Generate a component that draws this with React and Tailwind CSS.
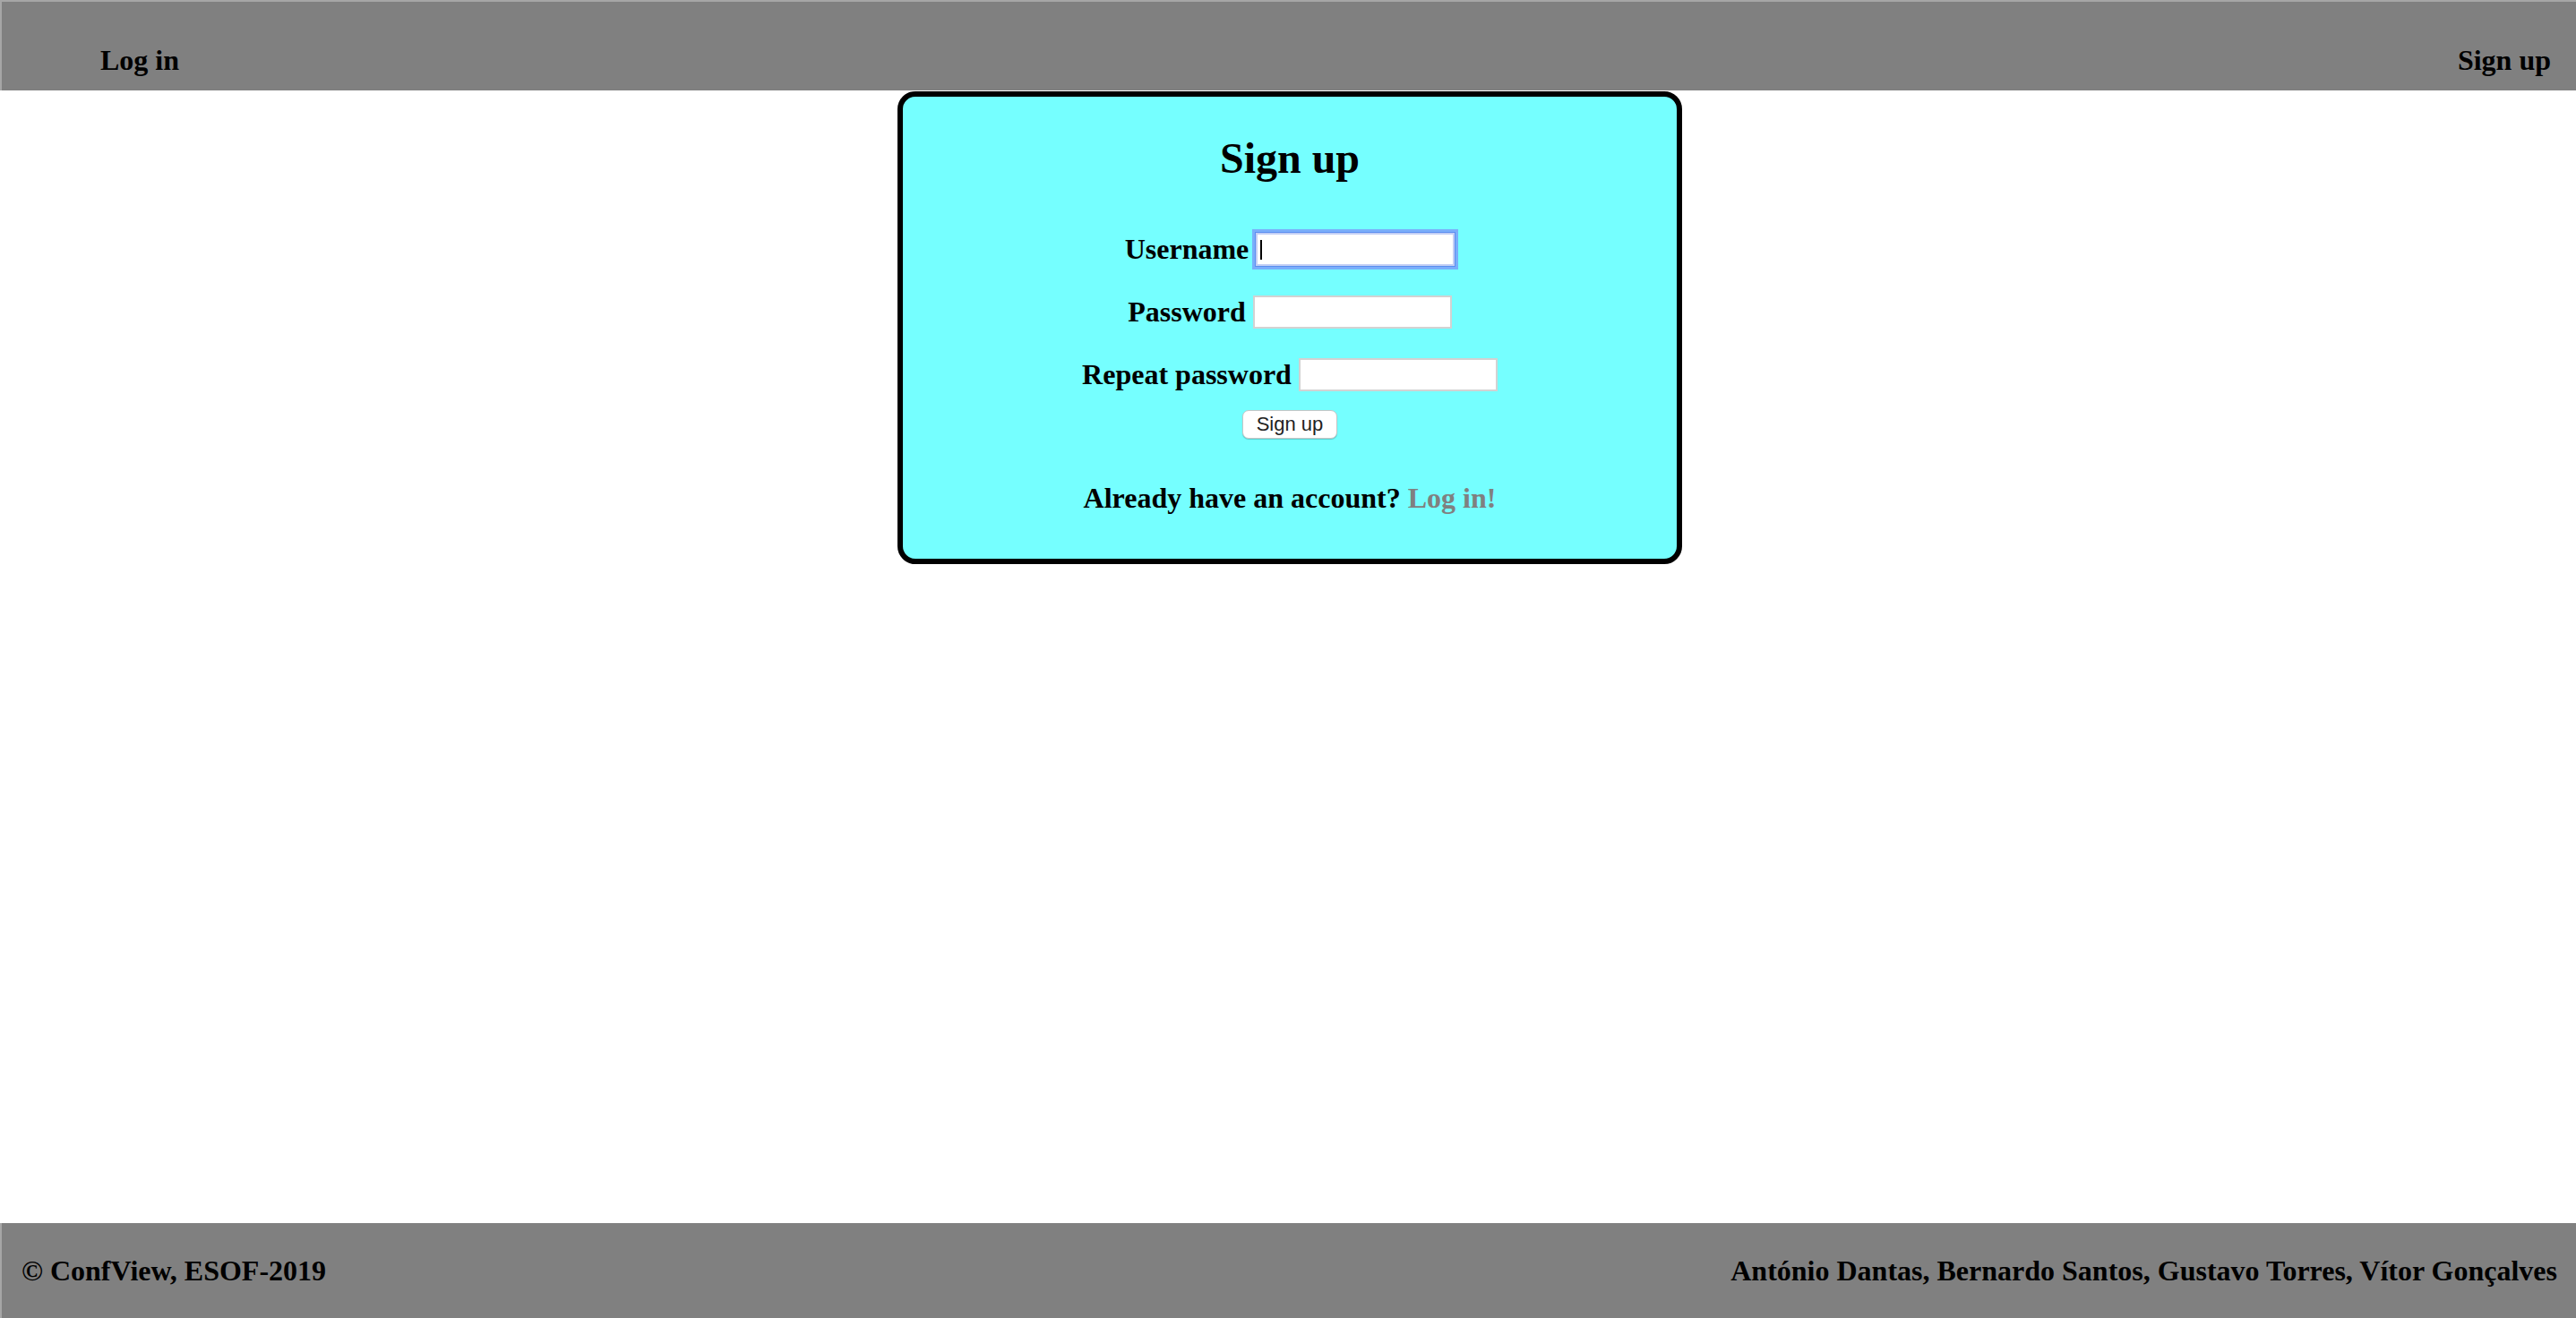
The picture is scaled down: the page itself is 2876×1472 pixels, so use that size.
import React from 'react';

const serif = { fontFamily: '"Liberation Serif", "Times New Roman", serif' };

const Field = ({ label, focused }) => (
    <div className="flex items-center justify-center gap-2 h-[37px]">
        <label className="text-[32px] font-bold leading-[37px] text-black">{label}</label>
        <div className="relative">
            <input
                type={label === 'Username' ? 'text' : 'password'}
                className={
                    focused
                        ? 'w-[222px] h-[37px] bg-white border-2 border-[#c3cff5] outline-none shadow-[0_0_0_1px_#5b8ef0,0_0_0_4px_#7aaefa]'
                        : 'w-[222px] h-[37px] bg-white border-2 border-[#d2d2d2] outline-none'
                }
            />
            {focused && <span className="absolute left-[5px] top-[8px] w-[2px] h-[22px] bg-black"></span>}
        </div>
    </div>
);

export default function App() {
    return (
        <div className="min-h-screen flex flex-col bg-white" style={serif}>

            {/* HEADER */}
            <header className="h-[101px] bg-[#808080] border-t-2 border-l-2 border-[#a6a6a6] flex justify-between pt-[47px] pl-[110px] pr-[28px]">
                <a className="text-[32px] font-bold leading-[37px] text-black">Log in</a>
                <a className="text-[32px] font-bold leading-[37px] text-black">Sign up</a>
            </header>

            {/* MAIN */}
            <main className="flex-1 flex justify-center">
                <div className="mt-px ml-1 w-[876px] h-[528px] bg-[#75ffff] border-[6px] border-black rounded-[20px] flex flex-col items-center pt-[41px]">
                    <h2 className="text-[48px] font-bold leading-[55px] text-black">Sign up</h2>

                    <div className="mt-[56px] flex flex-col gap-[33px]">
                        <Field label="Username" focused />
                        <Field label="Password" />
                        <Field label="Repeat password" />
                    </div>

                    <button
                        className="mt-[21px] w-[106px] h-[32px] bg-white border border-[#c6c6c6] rounded-[7px] shadow-[0_1px_1px_rgba(0,0,0,0.2)] text-[22px] text-[#222] leading-none"
                        style={{ fontFamily: '"Liberation Sans", Arial, sans-serif' }}
                    >
                        Sign up
                    </button>

                    <p className="mt-[48px] text-[32px] font-bold leading-[37px] text-black">
                        Already have an account? <a className="text-[#808080]">Log in!</a>
                    </p>
                </div>
            </main>

            {/* FOOTER */}
            <footer className="h-[106px] bg-[#808080] border-l-2 border-[#a6a6a6] flex items-center justify-between pl-[22px] pr-[21px]">
                <p className="text-[32px] font-bold leading-[37px] text-black">© ConfView, ESOF-2019</p>
                <p className="text-[32px] font-bold leading-[37px] text-black">António Dantas, Bernardo Santos, Gustavo Torres, Vítor Gonçalves</p>
            </footer>
        </div>
    );
}
